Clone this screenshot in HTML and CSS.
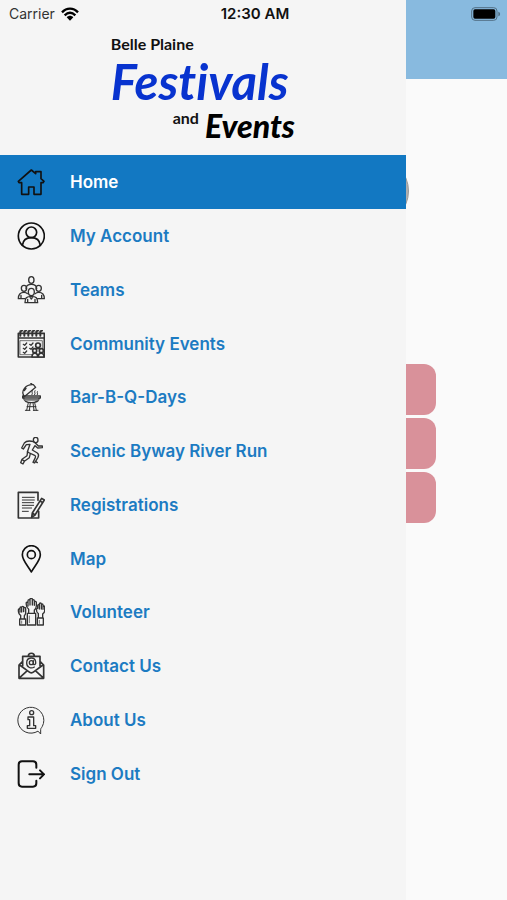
FILE: index.html
```html
<!DOCTYPE html>
<html lang="en">
<head>
<meta charset="utf-8">
<meta name="viewport" content="width=device-width, initial-scale=1">
<title>Belle Plaine Festivals and Events</title>
<link rel="stylesheet" href="styles.css">
</head>
<body>
<div class="app">
  <main class="page" aria-hidden="true">
    <div class="page-header"></div>
    <div class="page-badge"></div>
    <div class="page-cards">
      <div class="card"></div>
      <div class="card"></div>
      <div class="card"></div>
    </div>
  </main>

  <aside class="drawer">
    <h1 class="logo">
      <span class="logo-place">Belle Plaine</span>
      <span class="logo-festivals">Festivals</span>
      <span class="logo-last"><span class="logo-and">and</span> <span class="logo-events">Events</span></span>
    </h1>
    <nav class="menu">
      <a class="item active" href="#home">
        <svg class="icon" viewBox="0 0 84 84" stroke-width="5"><path d="M4 40 43 6l13 11V11h16v21l9 8-3 4h-6v35H51V57H35v22H14V44H6z"/></svg>
        <span>Home</span></a>
      <a class="item" href="#account">
        <svg class="icon" viewBox="0 0 84 84" stroke-width="5"><circle cx="43" cy="42" r="39"/><circle cx="43" cy="31" r="16"/><path d="M16 70c2-15 12-23 27-23s25 8 27 23"/></svg>
        <span>My Account</span></a>
      <a class="item" href="#teams">
        <svg class="icon thin" viewBox="0 0 84 84" stroke-width="4"><ellipse cx="43" cy="12" rx="8" ry="10"/><path d="M27 38c0-9 5-13 16-13s16 4 16 13"/><ellipse cx="21" cy="37" rx="8" ry="9"/><ellipse cx="65" cy="37" rx="8" ry="9"/><path d="M4 68c0-13 4-19 17-19 5 0 8 1 10 4M82 68c0-13-4-19-17-19-5 0-8 1-10 4M4 68h20M62 68h20M12 68V58M74 68V58"/><ellipse cx="43" cy="48" rx="9" ry="11"/><path d="M24 80c0-14 4-19 19-19s19 5 19 19zM38 62l5 7 5-7M32 80V70M54 80V70"/></svg>
        <span>Teams</span></a>
      <a class="item" href="#events">
        <svg class="icon thin" viewBox="0 0 84 84" stroke-width="5"><path d="M4 10h78v71H4zM4 24h78"/><path d="M10 32h66v42H10z" stroke-width="2"/><path stroke-width="6" d="M10 17V4l5-2M22 17V4l5-2M34 17V4l5-2M46 17V4l5-2M58 17V4l5-2M70 17V4l5-2"/><path stroke-width="4" d="m19 43 4 3 6-7M38 43l4 3 6-7M19 55l4 3 6-7M38 55l4 3 6-7M19 67l4 3 6-7"/><g fill="#f5f5f5"><path d="M53 62c0-9 20-9 20 0v12H53z"/><circle cx="63" cy="46" r="7"/><circle cx="53" cy="62" r="6"/><circle cx="73" cy="62" r="6"/><path d="M45 81c0-15 17-15 17 0zM64 81c0-15 17-15 17 0z"/></g></svg>
        <span>Community Events</span></a>
      <a class="item" href="#bbq">
        <svg class="icon thin" viewBox="0 0 84 84" stroke-width="4"><path d="M20 37C12 24 26 3 49 5l7 8-36 30zM45 4l-4-4M22 23l5-7"/><path d="M17 39h53v6H17zM20 45c1 9 8 14 23 14s22-5 24-14z"/><path stroke="#777" stroke-width="7" d="M25 50h37"/><path stroke-width="3" d="m34 59-5 23M53 59l5 23M40 59l-3 23M48 59l3 23M30 71h27M25 82h14M49 82h14"/><path stroke-width="3" d="M45 35c4-5-3-6 1-12M53 35c4-5-3-6 1-12M61 35c3-4-2-5 0-9"/></svg>
        <span>Bar-B-Q-Days</span></a>
      <a class="item" href="#run">
        <svg class="icon thin" viewBox="0 0 84 84" stroke-width="4"><ellipse cx="56" cy="9" rx="7" ry="8"/><path d="M50 14c-11-3-23-2-28 4L14 33l5 3 9-13 11-1-8 23 22 10c4 2 3 5 1 9l-6 12 5 2 10-17c3-6 2-10-2-13l-15-9 8-13 8 7 14-1v-5H64l-9-9z"/><path d="m32 43-2 13-15 11-4 10 7 4 4-8 15-11 3-12M15 67l7 6M55 73l6 4"/></svg>
        <span>Scenic Byway River Run</span></a>
      <a class="item" href="#registrations">
        <svg class="icon thin" viewBox="0 0 84 84" stroke-width="5"><path d="M63 28V4H4v77h61V61"/><path d="M16 19h36M16 27h36M16 35h34M16 43h34M16 51h28M16 61h18" stroke-width="3"/><path fill="#f5f5f5" d="m74 22 8 5-28 45-10 7 2-13zM46 66l8 6M69 30l8 5"/></svg>
        <span>Registrations</span></a>
      <a class="item" href="#map">
        <svg class="icon" viewBox="0 0 84 84" stroke-width="5"><path d="M43 81C36 66 16 47 16 29a27 27 0 0 1 54 0c0 18-20 37-27 52z"/><circle cx="43" cy="29" r="12"/></svg>
        <span>Map</span></a>
      <a class="item" href="#volunteer">
        <svg class="icon thin" viewBox="0 0 84 84" stroke-width="4"><path d="M31 46h25v35H31zM35 46V34c-8-6-8-14-7-21l5-1V8c0-4 6-4 6 0V4c0-4 7-4 7 0v4c0-4 6-4 6 0v4c0-3 6-3 6 1v11c0 7-2 9-6 12v10M33 13v11M39 9v12M46 9v12M52 12v10"/><path d="M8 63h18v18H8zM11 63V52C5 49 4 42 4 36c0-4 4-4 5-1v-5c0-4 5-4 5 0v-2c0-4 6-4 6 0v3c0-4 6-3 6 1v13c0 4-2 6-4 8v10M9 34v8M14 31v11M20 32v9"/><path d="M61 60h18v21H61zM64 60V47c-5-3-6-8-6-14l4-2v-8c0-4 5-4 5 0v-5c0-4 6-4 6 0v3c0-4 5-4 5 0v5c0-4 5-3 5 1v11c0 5-3 7-6 10v12M67 23v10M73 21v12M78 24v10"/><path stroke-width="2" d="M37 54v20M14 69v7M67 67v9"/></svg>
        <span>Volunteer</span></a>
      <a class="item" href="#contact">
        <svg class="icon thin" viewBox="0 0 84 84" stroke-width="5"><path d="M17 42V13h52v29M34 12c0-11 18-11 18 0M17 28 6 39v40h74V39L69 28M8 39l27 20c6 5 10 5 16 0l27-20M8 77l23-21M78 77 55 56"/><g stroke-width="4"><circle cx="43" cy="32" r="6"/><path d="M49 26v10c4 5 8 0 7-6-2-17-27-16-27 3 0 14 14 18 23 12"/></g></svg>
        <span>Contact Us</span></a>
      <a class="item" href="#about">
        <svg class="icon thin" viewBox="0 0 84 84" stroke-width="3"><path d="M62 76A39 39 0 1 1 76 61c-2 5-5 5-5 10v12z"/><g stroke-width="4"><circle cx="44" cy="20" r="6"/><path d="M33 33h17v26h6v8H31v-8h7V41h-5z"/></g></svg>
        <span>About Us</span></a>
      <a class="item" href="#signout">
        <svg class="icon" viewBox="0 0 84 84" stroke-width="6"><path d="M58 23V14c0-7-3-10-10-10H15C8 4 5 7 5 14v56c0 7 3 10 10 10h33c7 0 10-3 10-10v-8M37 43h44M69 31l12 12-12 12"/></svg>
        <span>Sign Out</span></a>
    </nav>
  </aside>

  <div class="status">
    <span class="carrier">Carrier
      <svg class="wifi" viewBox="0 0 54 42" aria-label="Wi-Fi"><path d="M3 16C17 1 37 1 51 16M11 25c10-10 22-10 32 0" fill="none" stroke="#000" stroke-width="7"/><path d="M17 31c6-6 14-6 20 0L27 41z"/></svg>
    </span>
    <span class="time">12:30 AM</span>
    <svg class="battery" viewBox="0 0 90 42" aria-label="Battery full"><rect x="2" y="2" width="76" height="38" rx="10" fill="none" stroke="#527086" stroke-width="3"/><rect x="7" y="7" width="66" height="28" rx="5"/><path d="M82 14c7 2 7 12 0 14z" fill="#527086"/></svg>
  </div>
</div>
</body>
</html>
```
FILE: styles.css
```css
* {
  box-sizing: border-box;
}

body {
  margin: 0;
  font-family: Inter, "Liberation Sans", sans-serif;
  background: #fafafa;
}

.app {
  position: relative;
  min-height: 100vh;
  display: flex;
}

/* Dimmed page behind the drawer */
.page {
  position: absolute;
  inset: 0;
  overflow: hidden;
}

.page-header {
  height: 79px;
  background: #88badf;
}

.page-badge {
  width: 68px;
  height: 68px;
  margin: 78px 98px 0 auto;
  border-radius: 50%;
  background: #b0b0b0;
  border: 1px solid #999;
}

.page-cards {
  display: grid;
  gap: 3px;
  margin: 139px 71px 0;
}

.card {
  height: 51px;
  border-radius: 12px;
  background: #d9919a;
}

/* Drawer */
.drawer {
  position: relative;
  width: 80%;
  display: flex;
  flex-direction: column;
  padding-bottom: 100px;
  background: #f5f5f5;
}

.logo {
  display: flex;
  flex-direction: column;
  align-self: center;
  width: 184px;
  height: 155px;
  margin: 0;
  padding-top: 34px;
  color: #111;
  font-family: Lato, sans-serif;
  font-weight: 700;
  font-variant-ligatures: none;
  white-space: nowrap;
}

.logo-place,
.logo-and {
  font-size: 16px;
  line-height: 20px;
}

.logo-festivals {
  color: #0833cf;
  font-size: 49px;
  font-style: italic;
  line-height: 54px;
}

.logo-last {
  display: flex;
  justify-content: flex-end;
  gap: 6px;
}

.logo-events {
  color: #000;
  font-size: 32px;
  font-style: italic;
  font-weight: 900;
  line-height: 36px;
}

.menu {
  flex: 1;
  display: grid;
  grid-auto-rows: minmax(44px, 1fr);
}

.item {
  display: flex;
  align-items: center;
  gap: 25px;
  padding: 1px 17px 0;
  color: #1c7bc2;
  font-size: 17px;
  font-weight: 600;
  line-height: 24px;
  text-decoration: none;
}

.item.active {
  background: #1278c2;
  color: #fff;
}

.icon {
  flex: none;
  width: 28px;
  height: 28px;
  fill: none;
  stroke: #111;
  stroke-linejoin: round;
  stroke-linecap: round;
}

.icon.thin {
  stroke: #333;
}

/* Status bar */
.status {
  position: absolute;
  inset: 0 0 auto;
  display: grid;
  grid-template-columns: 1fr auto 1fr;
  align-items: center;
  height: 27px;
  padding: 0 6px 0 9px;
  font-size: 14px;
  color: #111;
}

.carrier {
  display: flex;
  align-items: center;
  gap: 6px;
  color: #333;
}

.wifi {
  width: 18px;
  height: 14px;
}

.time {
  font-size: 15px;
  font-weight: 600;
}

.battery {
  justify-self: end;
  width: 30px;
  height: 14px;
}
```
